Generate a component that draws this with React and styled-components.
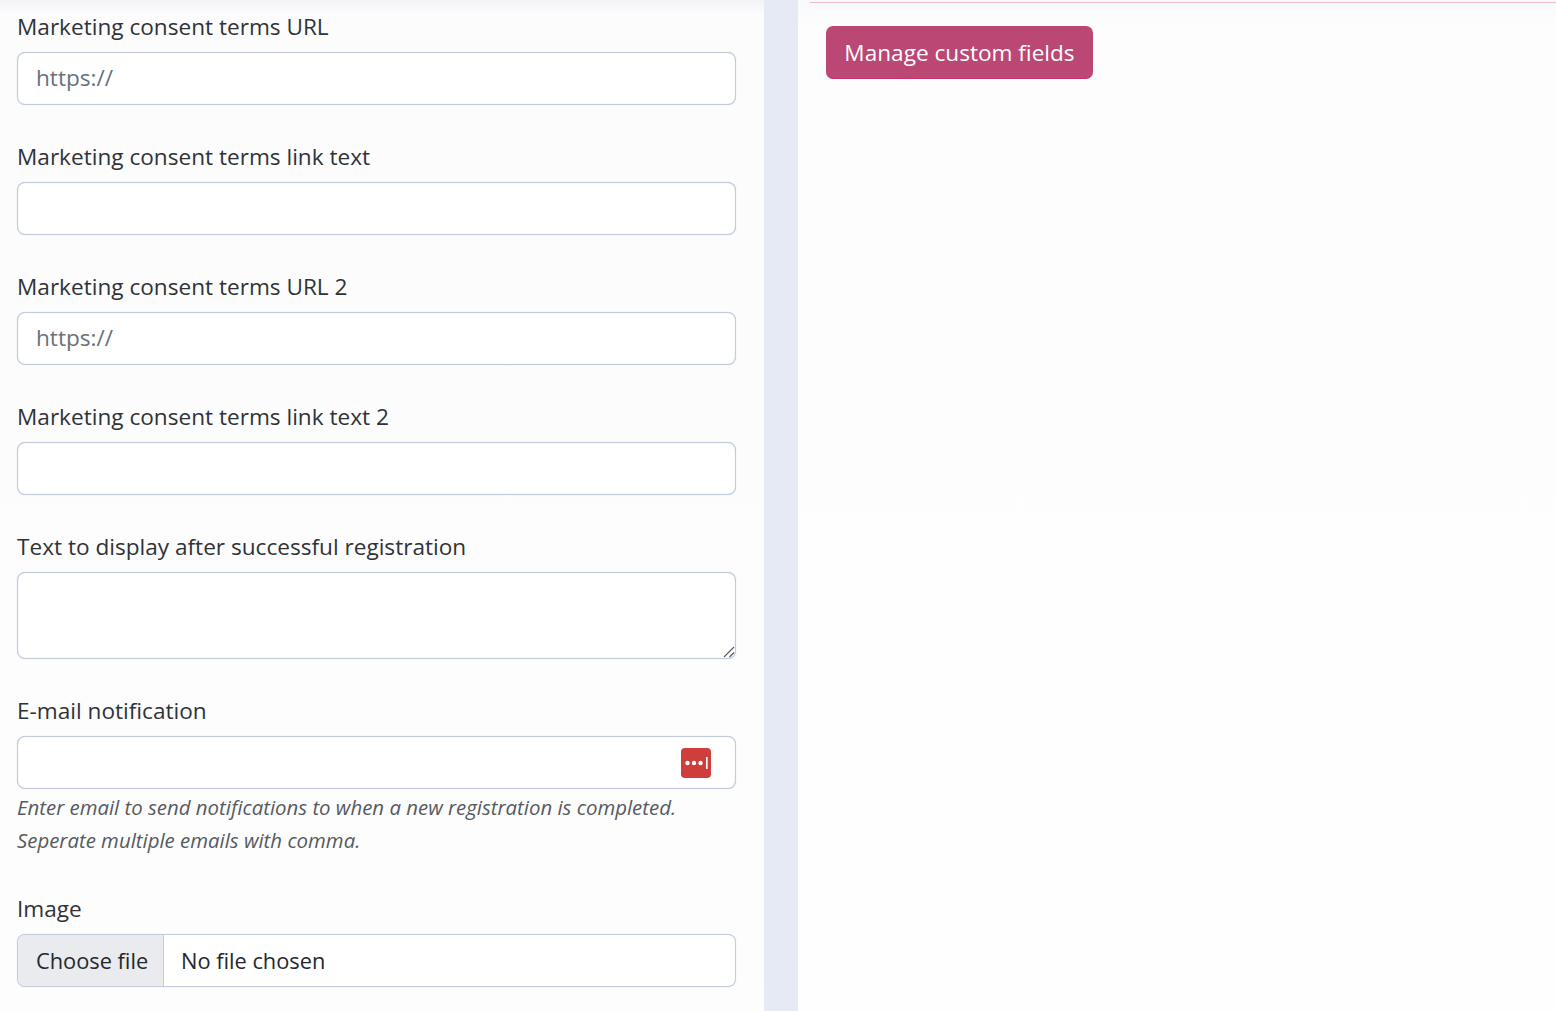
import React from "react";
import styled, { createGlobalStyle } from "styled-components";

const Global = createGlobalStyle`
  html, body { margin: 0; padding: 0; background: #e6eaf5; }
  body { font-family: "Open Sans", "Noto Sans", sans-serif; color: #2b2f33; overflow: hidden; }
  * { box-sizing: border-box; }
`;

const Page = styled.div`
  display: grid;
  grid-template-columns: 764px 1fr;
  column-gap: 34px;
  height: 1011px;
  overflow: hidden;
`;

const LeftPanel = styled.section`
  background: linear-gradient(#f3f4f6 0, #fcfcfd 14px, #fdfdfe 100%);
  padding: 10px 28px 0 17px;
  display: flex;
  flex-direction: column;
`;

const RightPanel = styled.section`
  background: linear-gradient(#f8f9fa 0, #fdfdfe 30px, #fefefe 100%);
  padding: 2px 0 0 12px;
`;

const Rule = styled.div`
  height: 1px;
  background: #e8bfd0;
`;

const ManageButton = styled.button`
  display: block;
  margin: 23px 0 0 16px;
  width: 267px;
  height: 53px;
  border: 0;
  border-bottom: 1px solid #c8336a;
  border-radius: 7px;
  background: #bb4774;
  color: #fff;
  font: 400 22.6px/1 "Open Sans", sans-serif;
  padding: 2px 0 0;
`;

const Field = styled.div`
  margin-bottom: ${(p) => p.$gap}px;
`;

const Label = styled.label`
  display: block;
  font-size: 22.6px;
  line-height: 33px;
  margin-bottom: 9px;
  color: #2f3336;
`;

const Input = styled.input`
  display: block;
  width: 100%;
  height: 53px;
  padding: 0 18px 2px;
  border: 1px solid #c4cbdb;
  box-shadow: 0 0 1px #c4cbdb, inset 0 0 1px #c4cbdb;
  border-radius: 8px;
  background: #fff;
  font: 400 22.6px "Open Sans", sans-serif;
  color: #2b2f33;
  outline: none;
  &::placeholder { color: #69717a; opacity: 1; }
`;

const TextBox = styled.div`
  position: relative;
`;

const TextArea = styled.textarea`
  display: block;
  width: 100%;
  height: 87px;
  padding: 10px 18px;
  border: 1px solid #c4cbdb;
  box-shadow: 0 0 1px #c4cbdb, inset 0 0 1px #c4cbdb;
  border-radius: 8px;
  background: #fff;
  font: 400 22.6px "Open Sans", sans-serif;
  outline: none;
  resize: none;
`;

const Grip = styled.svg`
  position: absolute;
  right: 1px;
  bottom: 1px;
  width: 13px;
  height: 13px;
`;

const KeyBadge = styled.svg`
  position: absolute;
  right: 25px;
  top: 12px;
  width: 30px;
  height: 30px;
`;

const Help = styled.p`
  margin: 2px 0 0;
  font-size: 20.4px;
  line-height: 33px;
  font-style: italic;
  color: #565a5f;
`;

const FileBox = styled.div`
  display: flex;
  height: 53px;
  border: 1px solid #c4cbdb;
  box-shadow: 0 0 1px #c4cbdb;
  border-radius: 8px;
  background: #fff;
  overflow: hidden;
  font-size: 21.8px;
  align-items: stretch;
`;

const FileButton = styled.span`
  display: flex;
  align-items: center;
  width: 146px;
  padding-left: 18px;
  background: #e9ebef;
  border-right: 1px solid #c4cbdb;
  color: #24282c;
`;

const FileName = styled.span`
  display: flex;
  align-items: center;
  padding-left: 17px;
  color: #24282c;
`;

export default function App() {
  return (
    <Page>
      <Global />
      <LeftPanel>
        <Field $gap={35}>
          <Label>Marketing consent terms URL</Label>
          <Input placeholder="https://" readOnly />
        </Field>
        <Field $gap={35}>
          <Label>Marketing consent terms link text</Label>
          <Input readOnly />
        </Field>
        <Field $gap={35}>
          <Label>Marketing consent terms URL 2</Label>
          <Input placeholder="https://" readOnly />
        </Field>
        <Field $gap={35}>
          <Label>Marketing consent terms link text 2</Label>
          <Input readOnly />
        </Field>
        <Field $gap={35}>
          <Label>Text to display after successful registration</Label>
          <TextBox>
            <TextArea readOnly />
            <Grip viewBox="0 0 13 13">
              <path d="M2 12 L12 2 M7.5 12 L12 7.5" stroke="#55595e" strokeWidth="1.1" fill="none" />
            </Grip>
          </TextBox>
        </Field>
        <Field $gap={35}>
          <Label>E-mail notification</Label>
          <TextBox>
            <Input readOnly />
            <KeyBadge viewBox="0 0 30 30">
              <rect width="30" height="30" rx="4" fill="#cf3e3a" />
              <circle cx="6.5" cy="15" r="2.2" fill="#fff" />
              <circle cx="13" cy="15" r="2.2" fill="#fff" />
              <circle cx="19.5" cy="15" r="2.2" fill="#fff" />
              <rect x="25" y="9" width="1.6" height="12" fill="#fff" />
            </KeyBadge>
          </TextBox>
          <Help>
            Enter email to send notifications to when a new registration is completed.
            <br />
            Seperate multiple emails with comma.
          </Help>
        </Field>
        <Field $gap={0}>
          <Label>Image</Label>
          <FileBox>
            <FileButton>Choose file</FileButton>
            <FileName>No file chosen</FileName>
          </FileBox>
        </Field>
      </LeftPanel>
      <RightPanel>
        <Rule />
        <ManageButton>Manage custom fields</ManageButton>
      </RightPanel>
    </Page>
  );
}
